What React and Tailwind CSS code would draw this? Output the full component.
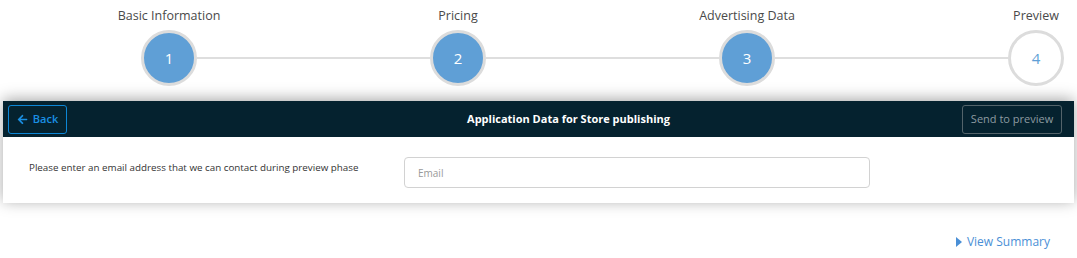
import { FaArrowLeft } from "react-icons/fa";

const steps = [
  { n: 1, label: "Basic Information", done: true },
  { n: 2, label: "Pricing", done: true },
  { n: 3, label: "Advertising Data", done: true },
  { n: 4, label: "Preview", done: false },
];

function Step({ step }) {
  return (
    <div className="flex w-14 flex-col items-center">
      <div className="h-5 whitespace-nowrap text-[12.5px] leading-5 text-[#4a4a4a]">
        {step.label}
      </div>
      <div
        className={
          step.done
            ? "mt-1 flex h-14 w-14 items-center justify-center rounded-full border-[3px] border-[#dcdcdc] bg-[#5f9fd6] text-[15px] text-white"
            : "mt-1 flex h-14 w-14 items-center justify-center rounded-full border-[3px] border-[#dcdcdc] bg-white text-[15px] text-[#5f9fd6]"
        }
      >
        {step.n}
      </div>
    </div>
  );
}

function Stepper() {
  return (
    <div className="flex h-[101px] items-start pl-[141px] pt-[6px]">
      {steps.map((step, i) => (
        <div key={step.n} className="flex items-start">
          <Step step={step} />
          {i < steps.length - 1 && (
            <div className="mt-[51px] h-[2px] w-[233px] bg-[#dedede]" />
          )}
        </div>
      ))}
    </div>
  );
}

export default function App() {
  return (
    <div
      className="h-[258px] w-[1077px] overflow-hidden bg-white"
      style={{ fontFamily: '"Open Sans", "Liberation Sans", sans-serif' }}
    >
      <Stepper />

      <div className="mx-[3px] bg-white shadow-[0_-2px_14px_rgba(0,0,0,0.35)]">
        <div className="flex h-9 items-center bg-[#05222f] pl-[5px] pr-[12px]">
          <button className="flex h-[29px] w-[59px] items-center justify-center gap-[5px] rounded-[3px] border border-[#0c86d6] text-[11px] font-semibold text-[#1a8fe3]">
            <FaArrowLeft size={11} />
            Back
          </button>
          <div className="flex-1 pl-[108px] text-center text-[11px] font-bold text-white">
            Application Data for Store publishing
          </div>
          <button className="h-[29px] w-[100px] rounded-[3px] border border-[#53636a] text-[11px] text-[#8d9ba1]">
            Send to preview
          </button>
        </div>

        <div className="flex h-[66px] items-start pl-[26px] pt-[20px]">
          <div className="mt-[4px] w-[375px] text-[9.8px] text-[#333]">
            Please enter an email address that we can contact during preview phase
          </div>
          <input
            type="text"
            placeholder="Email"
            className="h-[31px] w-[466px] rounded-[4px] border border-[#d2d2d2] pl-[13px] text-[10px] text-[#333] outline-none placeholder:text-[#999]"
          />
        </div>
      </div>

      <div className="mt-[30px] flex items-center justify-end gap-[5px] pr-[27px] text-[12px] text-[#4a8fd6]">
        <span className="h-0 w-0 border-y-[5px] border-l-[6px] border-y-transparent border-l-[#4a8fd6]" />
        View Summary
      </div>
    </div>
  );
}
